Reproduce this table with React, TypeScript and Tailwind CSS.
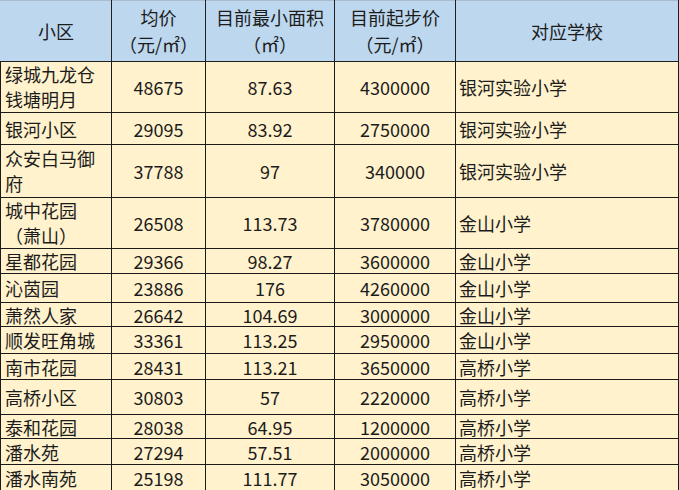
import React from 'react';

type Row = {
  name: string[];
  price: string;
  area: string;
  start: string;
  school: string;
  h: string;
};

const rows: Row[] = [
  { name: ['绿城九龙仓', '钱塘明月'], price: '48675', area: '87.63', start: '4300000', school: '银河实验小学', h: 'h-[50px]' },
  { name: ['银河小区'], price: '29095', area: '83.92', start: '2750000', school: '银河实验小学', h: 'h-[32px]' },
  { name: ['众安白马御', '府'], price: '37788', area: '97', start: '340000', school: '银河实验小学', h: 'h-[53px]' },
  { name: ['城中花园', '（萧山）'], price: '26508', area: '113.73', start: '3780000', school: '金山小学', h: 'h-[51px]' },
  { name: ['星都花园'], price: '29366', area: '98.27', start: '3600000', school: '金山小学', h: 'h-[25px]' },
  { name: ['沁茵园'], price: '23886', area: '176', start: '4260000', school: '金山小学', h: 'h-[29px]' },
  { name: ['萧然人家'], price: '26642', area: '104.69', start: '3000000', school: '金山小学', h: 'h-[24px]' },
  { name: ['顺发旺角城'], price: '33361', area: '113.25', start: '2950000', school: '金山小学', h: 'h-[27px]' },
  { name: ['南市花园'], price: '28431', area: '113.21', start: '3650000', school: '高桥小学', h: 'h-[26px]' },
  { name: ['高桥小区'], price: '30803', area: '57', start: '2220000', school: '高桥小学', h: 'h-[35px]' },
  { name: ['泰和花园'], price: '28038', area: '64.95', start: '1200000', school: '高桥小学', h: 'h-[24px]' },
  { name: ['潘水苑'], price: '27294', area: '57.51', start: '2000000', school: '高桥小学', h: 'h-[26px]' },
  { name: ['潘水南苑'], price: '25198', area: '111.77', start: '3050000', school: '高桥小学', h: 'h-[26px]' },
];

const th = 'border border-[#1f1f1f] border-t-[#a9bccd] font-normal text-center align-middle p-0 leading-[27px]';
const td = 'border border-[#1a1a1a] align-middle p-0 leading-[20px]';

export default function App() {
  return (
    <div className="w-[679px] h-[490px] bg-white overflow-hidden font-['Noto_Sans_CJK_SC','Noto_Sans',sans-serif] text-[18px] text-[#1c1c1c]">
      <table className="table-fixed border-collapse w-[678px]">
        <colgroup>
          <col className="w-[111px]" />
          <col className="w-[94px]" />
          <col className="w-[129px]" />
          <col className="w-[121px]" />
          <col className="w-[223px]" />
        </colgroup>
        <thead>
          <tr className="h-[61px] bg-[#bdd7ee]">
            <th className={`${th} border-l-[#bdd7ee]`}>小区</th>
            <th className={th}>
              均价
              <br />
              （元/㎡）
            </th>
            <th className={th}>
              目前最小面积
              <br />
              （㎡）
            </th>
            <th className={th}>
              目前起步价
              <br />
              （元/㎡）
            </th>
            <th className={th}>对应学校</th>
          </tr>
        </thead>
        <tbody className="bg-[#fff2cc]">
          {rows.map((r) => (
            <tr key={r.name.join('')} className={r.h}>
              <td className={`${td} pl-[4px] ${r.name.length > 1 ? 'leading-[25px]' : ''}`}>
                {r.name.map((n, i) => (
                  <div key={i}>{n}</div>
                ))}
              </td>
              <td className={`${td} text-center`}>{r.price}</td>
              <td className={`${td} text-center`}>{r.area}</td>
              <td className={`${td} text-center`}>{r.start}</td>
              <td className={`${td} pl-[3px]`}>{r.school}</td>
            </tr>
          ))}
        </tbody>
      </table>
    </div>
  );
}
